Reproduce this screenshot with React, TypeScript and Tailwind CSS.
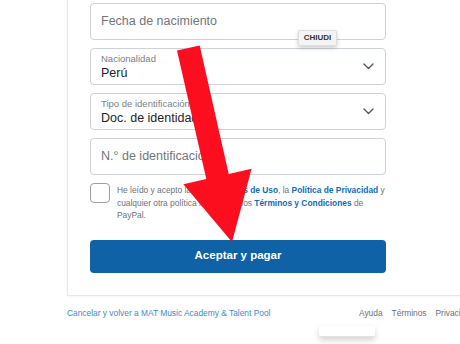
import React from "react";

const Chevron = () => (
  <svg width="11" height="7" viewBox="0 0 11 7" fill="none">
    <path d="M1 1l4.5 4.5L10 1" stroke="#4b5563" strokeWidth="1.3" strokeLinecap="round" strokeLinejoin="round" />
  </svg>
);

function TextField({ placeholder }: { placeholder: string }) {
  return (
    <div className="h-[37px] w-[296px] rounded-[4px] border border-[#cdd2d9] bg-white flex items-center pl-[10px]">
      <span className="text-[12.5px] text-[#6f7680]">{placeholder}</span>
    </div>
  );
}

function SelectField({ label, value }: { label: string; value: string }) {
  return (
    <div className="h-[37px] w-[296px] rounded-[4px] border border-[#cdd2d9] bg-white flex items-center justify-between pl-[10px] pr-[11px]">
      <div className="flex flex-col leading-none">
        <span className="text-[9.5px] text-[#7a8088] mb-[3px]">{label}</span>
        <span className="text-[12.5px] text-[#1f2328]">{value}</span>
      </div>
      <Chevron />
    </div>
  );
}

export default function App() {
  return (
    <div
      className="relative w-[460px] h-[344px] overflow-hidden bg-white"
      style={{ fontFamily: '"Liberation Sans", Arial, sans-serif' }}
    >
      <div className="pl-[67px]">
        <div className="w-[420px] border-l border-b border-[#e6e8eb] pl-[22px] pt-[3px] pb-[22px] shadow-[0_1px_2px_rgba(0,0,0,0.04)]">
          <div className="flex flex-col gap-[8px]">
            <TextField placeholder="Fecha de nacimiento" />
            <SelectField label="Nacionalidad" value="Perú" />
            <SelectField label="Tipo de identificación" value="Doc. de identidad" />
            <TextField placeholder="N.° de identificación" />
          </div>
          <div className="flex mt-[8px] w-[296px]">
            <div className="w-[20px] h-[20px] shrink-0 rounded-[4px] border border-[#9aa0a8] bg-white" />
            <p className="ml-[7px] whitespace-nowrap text-[8.4px] leading-[12.5px] text-[#6c727a] pt-[1px]">
              He leído y acepto las <b className="text-[#0f6cbd]">Condiciones de Uso</b>, la{" "}
              <b className="text-[#0f6cbd]">Política de Privacidad</b> y
              <br />
              cualquier otra política incluida en los{" "}
              <b className="text-[#0f6cbd]">Términos y Condiciones</b> de
              <br />
              PayPal.
            </p>
          </div>
          <button className="mt-[18px] h-[33px] w-[296px] rounded-[4px] bg-[#0f62a6] text-white text-[11.5px] font-bold">
            Aceptar y pagar
          </button>
        </div>
        <div className="grid grid-cols-[292px_auto] items-center pt-[11px] whitespace-nowrap text-[8.4px]">
          <span className="text-[#3a8ad2]">Cancelar y volver a MAT Music Academy &amp; Talent Pool</span>
          <div className="flex gap-[9px] text-[#6b6f75]">
            <span>Ayuda</span>
            <span>Términos</span>
            <span>Privacidad</span>
          </div>
        </div>
      </div>

      <div className="absolute left-[319px] top-[326px] w-[56px] h-[11px] bg-white rounded-[2px] border-b border-[#e2e2e2] shadow-[0_3px_6px_rgba(0,0,0,0.18)]" />

      <div className="absolute left-[298px] top-[30px] h-[16px] w-[39px] flex items-center justify-center bg-[#f4f4f4] border border-[#dedede] rounded-[2px] shadow-[0_2px_4px_rgba(0,0,0,0.2)] text-[8px] font-bold text-[#333]">
        CHIUDI
      </div>

      <svg className="absolute left-0 top-0" width="460" height="344" viewBox="0 0 460 344">
        <polygon
          points="177,50.5 199.7,45.5 228.7,174 251.6,168.8 232,242 183.4,184.2 206.3,179"
          fill="#fc0e1f"
        />
      </svg>
    </div>
  );
}
